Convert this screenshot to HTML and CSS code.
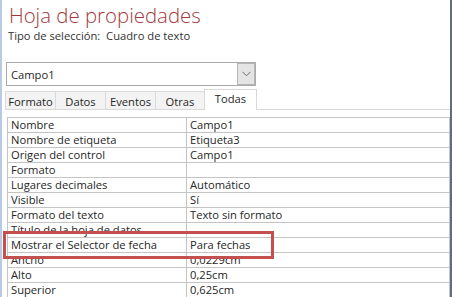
FILE: index.html
```html
<!DOCTYPE html>
<html lang="es">
<head>
<meta charset="utf-8">
<title>Hoja de propiedades</title>
<link rel="stylesheet" href="styles.css">
</head>
<body>
<div class="frame">
  <div class="title">Hoja de propiedades</div>
  <div class="subtitle">Tipo de selección:&nbsp;&nbsp;Cuadro de texto</div>
  <div class="combo">
    <span class="combo-text">Campo1</span>
    <span class="combo-btn">
      <svg width="9" height="6" viewBox="0 0 9 6"><path d="M0.5 0.8 L4.5 4.8 L8.5 0.8" fill="none" stroke="#6d6d6d" stroke-width="1"/></svg>
    </span>
  </div>
  <div class="tabs">
    <div class="tab t1">Formato</div>
    <div class="tab t2">Datos</div>
    <div class="tab t3">Eventos</div>
    <div class="tab t4">Otras</div>
    <div class="tab t5 active">Todas</div>
    <div class="tab-rest"></div>
  </div>
  <div class="grid">
    <div class="row"><div class="k">Nombre</div><div class="v">Campo1</div></div>
    <div class="row"><div class="k">Nombre de etiqueta</div><div class="v">Etiqueta3</div></div>
    <div class="row"><div class="k">Origen del control</div><div class="v">Campo1</div></div>
    <div class="row"><div class="k">Formato</div><div class="v"></div></div>
    <div class="row"><div class="k">Lugares decimales</div><div class="v">Automático</div></div>
    <div class="row"><div class="k">Visible</div><div class="v">Sí</div></div>
    <div class="row"><div class="k">Formato del texto</div><div class="v">Texto sin formato</div></div>
    <div class="row"><div class="k">Título de la hoja de datos</div><div class="v"></div></div>
    <div class="row"><div class="k">Mostrar el Selector de fecha</div><div class="v">Para fechas</div></div>
    <div class="row"><div class="k">Ancho</div><div class="v">0,0229cm</div></div>
    <div class="row"><div class="k">Alto</div><div class="v">0,25cm</div></div>
    <div class="row"><div class="k">Superior</div><div class="v">0,625cm</div></div>
  </div>
  <div class="highlight"></div>
</div>
</body>
</html>
```
FILE: styles.css
```css
html, body {
  margin: 0;
  padding: 0;
  background: #ffffff;
}
body {
  width: 452px;
  height: 297px;
  overflow: hidden;
  font-family: "Open Sans", "Noto Sans", sans-serif;
  color: #262626;
}
.frame {
  position: relative;
  box-sizing: border-box;
  width: 452px;
  height: 297px;
  border-left: 2px solid #b9cbe4;
  border-right: 2px solid #5f6e80;
  padding-top: 1px;
  overflow: hidden;
}
.title {
  height: 27px;
  line-height: 28px;
  font-size: 20.4px;
  font-weight: 300;
  color: #a3383c;
  padding-left: 7px;
}
.subtitle {
  height: 16px;
  line-height: 16px;
  font-size: 11.2px;
  padding-left: 6px;
  color: #333333;
}
.combo {
  margin: 18px 0 0 4px;
  width: 250px;
  height: 24px;
  box-sizing: border-box;
  border: 1px solid #ababab;
  display: flex;
  align-items: center;
  justify-content: space-between;
}
.combo-text {
  font-size: 11.2px;
  padding-left: 4px;
  line-height: 21px;
}
.combo-btn {
  width: 18px;
  height: 22px;
  box-sizing: border-box;
  border: 1px solid #b5b5b5;
  background: #e4e4e4;
  display: flex;
  align-items: center;
  justify-content: center;
}
.tabs {
  margin-top: 3px;
  margin-left: 3px;
  display: flex;
  align-items: flex-end;
  height: 21px;
}
.tab {
  box-sizing: border-box;
  height: 19px;
  line-height: 19px;
  font-size: 11.2px;
  text-align: center;
  background: #f3f3f3;
  border: 1px solid #d9d9d9;
  border-right: none;
}
.t1 { width: 50px; }
.t2 { width: 50px; }
.t3 { width: 50px; }
.t4 { width: 49px; }
.t5 { width: 53px; }
.tab.active {
  height: 21px;
  line-height: 17px;
  background: #ffffff;
  border: 1px solid #d9d9d9;
  border-bottom: none;
}
.tab-rest {
  flex: 1;
  height: 0;
  border-bottom: 1px solid #d9d9d9;
}
.grid {
  margin: 7px 0 0 5px;
  width: 443px;
  box-sizing: border-box;
  border: 1px solid #c4c4c4;
  border-bottom: none;
}
.row {
  display: grid;
  grid-template-columns: 179px 1fr;
  height: 15px;
  box-sizing: border-box;
  border-bottom: 1px solid #c4c4c4;
  font-size: 11.2px;
  line-height: 14px;
}
.k {
  padding-left: 3px;
  border-right: 1px solid #c4c4c4;
  white-space: nowrap;
}
.v {
  padding-left: 3px;
  white-space: nowrap;
}
.highlight {
  position: absolute;
  left: 1px;
  top: 231px;
  width: 271px;
  height: 28px;
  box-sizing: border-box;
  border: 3px solid #c3504f;
}
```
